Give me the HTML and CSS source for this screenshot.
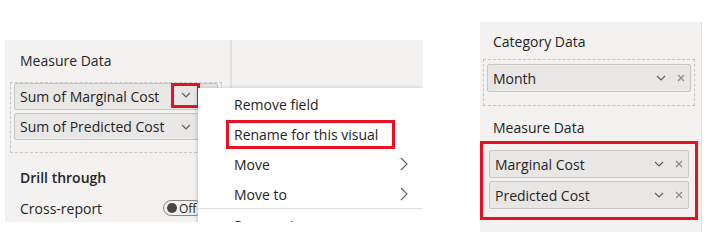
FILE: index.html
```html
<!DOCTYPE html>
<html lang="en">
<head>
    <meta charset="UTF-8">
    <title>Field wells</title>
    <link rel="stylesheet" href="styles.css">
</head>
<body>

<div class="pane pane-left">
    <div class="col-main">
        <div class="well-title">Measure Data</div>
        <div class="well">
            <div class="field">
                <span class="field-name">Sum of Marginal Cost</span>
                <span class="chev-box">
                    <svg width="10" height="6" viewBox="0 0 10 6"><path d="M1 1 L5 5 L9 1" fill="none" stroke="#605e5c" stroke-width="1.2"/></svg>
                </span>
            </div>
            <div class="field">
                <span class="field-name">Sum of Predicted Cost</span>
                <span class="chev">
                    <svg width="10" height="6" viewBox="0 0 10 6"><path d="M1 1 L5 5 L9 1" fill="none" stroke="#605e5c" stroke-width="1.2"/></svg>
                </span>
            </div>
        </div>
        <div class="section-title">Drill through</div>
        <div class="setting-row">
            <span>Cross-report</span>
            <span class="toggle"><span class="knob"></span>Off</span>
        </div>
    </div>
    <div class="col-side"></div>

    <div class="menu">
        <div class="menu-item">Remove field</div>
        <div class="menu-item"><span class="marked">Rename for this visual</span></div>
        <div class="menu-item">Move
            <svg class="arrow" width="8" height="14" viewBox="0 0 8 14"><path d="M1 1 L7 7 L1 13" fill="none" stroke="#605e5c" stroke-width="1.1"/></svg>
        </div>
        <div class="menu-item">Move to
            <svg class="arrow" width="8" height="14" viewBox="0 0 8 14"><path d="M1 1 L7 7 L1 13" fill="none" stroke="#605e5c" stroke-width="1.1"/></svg>
        </div>
        <div class="menu-sep"></div>
        <div class="menu-item menu-cut"><span class="dot">·</span>Summarize</div>
    </div>
</div>

<div class="pane pane-right">
    <div class="well-title">Category Data</div>
    <div class="well">
        <div class="field">
            <span class="field-name">Month</span>
            <span class="actions">
                <svg width="10" height="6" viewBox="0 0 10 6"><path d="M1 1 L5 5 L9 1" fill="none" stroke="#605e5c" stroke-width="1.2"/></svg>
                <svg width="8" height="8" viewBox="0 0 8 8"><path d="M1 1 L7 7 M7 1 L1 7" stroke="#8a8886" stroke-width="1.1"/></svg>
            </span>
        </div>
    </div>
    <div class="well-title title-second">Measure Data</div>
    <div class="well well-marked">
        <div class="field">
            <span class="field-name">Marginal Cost</span>
            <span class="actions">
                <svg width="10" height="6" viewBox="0 0 10 6"><path d="M1 1 L5 5 L9 1" fill="none" stroke="#605e5c" stroke-width="1.2"/></svg>
                <svg width="8" height="8" viewBox="0 0 8 8"><path d="M1 1 L7 7 M7 1 L1 7" stroke="#8a8886" stroke-width="1.1"/></svg>
            </span>
        </div>
        <div class="field">
            <span class="field-name">Predicted Cost</span>
            <span class="actions">
                <svg width="10" height="6" viewBox="0 0 10 6"><path d="M1 1 L5 5 L9 1" fill="none" stroke="#605e5c" stroke-width="1.2"/></svg>
                <svg width="8" height="8" viewBox="0 0 8 8"><path d="M1 1 L7 7 M7 1 L1 7" stroke="#8a8886" stroke-width="1.1"/></svg>
            </span>
        </div>
    </div>
</div>

</body>
</html>
```

FILE: styles.css
```css
body {
    margin: 0;
    padding: 0;
    width: 708px;
    height: 252px;
    background-color: #fff;
    font-family: 'Open Sans', sans-serif;
    font-size: 14px;
    color: #252423;
    display: flex;
    align-items: flex-start;
    overflow: hidden;
}

.pane {
    background-color: #f3f2f1;
    box-sizing: border-box;
}

.pane-left {
    position: relative;
    margin: 40px 0 0 5px;
    width: 418px;
    height: 182px;
    display: flex;
    overflow: hidden;
}

.col-main {
    width: 225px;
    padding: 11px 0 0 5px;
    box-sizing: border-box;
}

.col-side {
    border-left: 2px solid #e1dfdd;
    flex: 1;
}

.well-title {
    padding-left: 10px;
    height: 20px;
    line-height: 20px;
    margin-bottom: 11px;
}

.well {
    border: 1px dashed #c8c6c4;
    padding: 0 3px 12px 3px;
    display: flex;
    flex-direction: column;
    gap: 3px;
}

.pane-left .well {
    width: 212px;
    height: 71px;
    box-sizing: border-box;
    padding-top: 0;
}

.field {
    height: 28px;
    box-sizing: border-box;
    border: 1px solid #c8c6c4;
    border-radius: 2px;
    background-color: #e9e7e6;
    display: flex;
    align-items: center;
    justify-content: space-between;
    padding: 0 10px 0 5px;
    white-space: nowrap;
}

.pane-left .field {
    padding-right: 26px;
}

.chev-box {
    width: 29px;
    height: 25px;
    box-sizing: border-box;
    border: 3px solid #e81123;
    display: flex;
    align-items: center;
    justify-content: center;
    margin: -3px -9px 0 0;
    flex-shrink: 0;
}

.chev {
    display: flex;
}

.section-title {
    margin-top: 15px;
    padding-left: 10px;
    font-weight: 600;
    height: 20px;
    line-height: 20px;
}

.setting-row {
    margin-top: 10px;
    padding-left: 10px;
    display: flex;
    align-items: center;
    justify-content: space-between;
    height: 20px;
}

.toggle {
    display: flex;
    align-items: center;
    gap: 2px;
    width: 40px;
    height: 16px;
    border: 1px solid #8a8886;
    border-radius: 9px;
    font-size: 12px;
    padding-left: 3px;
    box-sizing: border-box;
    margin-right: 27px;
}

.knob {
    width: 10px;
    height: 10px;
    border-radius: 50%;
    background-color: #484644;
}

.menu {
    position: absolute;
    left: 193px;
    top: 48px;
    width: 225px;
    height: 150px;
    background-color: #fff;
    box-shadow: -1px 0 4px rgba(0, 0, 0, 0.18);
    padding-top: 1px;
}

.menu-item {
    height: 30px;
    display: flex;
    align-items: center;
    justify-content: space-between;
    padding: 0 15px 0 36px;
}

.marked {
    border: 3px solid #e81123;
    padding: 2px 14px 2px 5px;
    margin-left: -8px;
}

.menu-sep {
    height: 1px;
    background-color: #e1dfdd;
    margin-top: -1px;
}

.menu-cut {
    justify-content: flex-start;
    padding-left: 20px;
    margin-top: 1px;
}

.dot {
    width: 16px;
}

.pane-right {
    margin: 22px 0 0 57px;
    width: 222px;
    height: 210px;
    border-right: 1px solid #e1dfdd;
    padding: 10px 0 0 3px;
}

.pane-right .well-title {
    margin-bottom: 7px;
}

.pane-right .well {
    width: 212px;
    box-sizing: border-box;
    padding: 4px 3px 13px 3px;
}

.pane-right .title-second {
    margin-top: 12px;
    margin-bottom: 3px;
}

.well-marked {
    border: 3px solid #e81123;
    margin-left: -3px;
    width: 218px !important;
    padding: 6px 6px 8px 6px !important;
}

.actions {
    display: flex;
    align-items: center;
    gap: 11px;
    margin-right: -5px;
}
```
